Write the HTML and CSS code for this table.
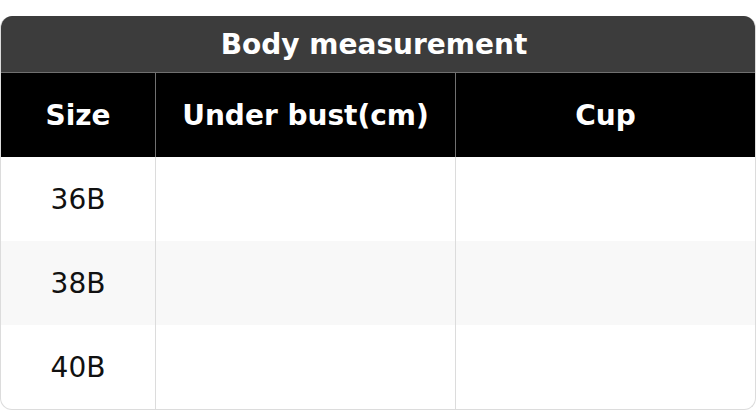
FILE: index.html
```html
<!DOCTYPE html>
<html>
<head>
<meta charset="utf-8">
<link rel="stylesheet" href="styles.css">
</head>
<body>
<div class="card">
  <div class="title">Body measurement</div>
  <table class="sizes">
    <thead>
      <tr><th class="c1">Size</th><th class="c2">Under bust(cm)</th><th class="c3">Cup</th></tr>
    </thead>
    <tbody>
      <tr><td>36B</td><td></td><td></td></tr>
      <tr class="alt"><td>38B</td><td></td><td></td></tr>
      <tr><td>40B</td><td></td><td></td></tr>
    </tbody>
  </table>
</div>
</body>
</html>
```
FILE: styles.css
```css
html, body {
  margin: 0;
  padding: 0;
  background: #fff;
}
body {
  padding-top: 16px;
  font-family: "DejaVu Sans", sans-serif;
}
.card {
  width: 756px;
  box-sizing: border-box;
  border: 1px solid #dcdcdc;
  border-top: none;
  border-radius: 12px;
  overflow: hidden;
}
.title {
  height: 56px;
  background: #3c3c3c;
  color: #fff;
  font-weight: bold;
  font-size: 28px;
  display: flex;
  align-items: center;
  justify-content: center;
  padding-right: 8px;
  border-bottom: 1px solid #707070;
}
.sizes {
  width: 100%;
  border-collapse: separate;
  border-spacing: 0;
  table-layout: fixed;
}
.sizes th {
  background: #000;
  color: #fff;
  font-weight: bold;
  font-size: 28px;
  height: 84px;
  padding: 0;
  text-align: center;
  border-left: 1px solid #707070;
}
.sizes th:first-child { border-left: none; }
.c1 { width: 154px; }
.c2 { width: 299px; }
.sizes td {
  height: 84px;
  padding: 0;
  text-align: center;
  font-size: 28px;
  color: #111;
  border-left: 1px solid #dcdcdc;
}
.sizes td:first-child { border-left: none; }
.sizes tr.alt td { background: #f8f8f8; }
```
